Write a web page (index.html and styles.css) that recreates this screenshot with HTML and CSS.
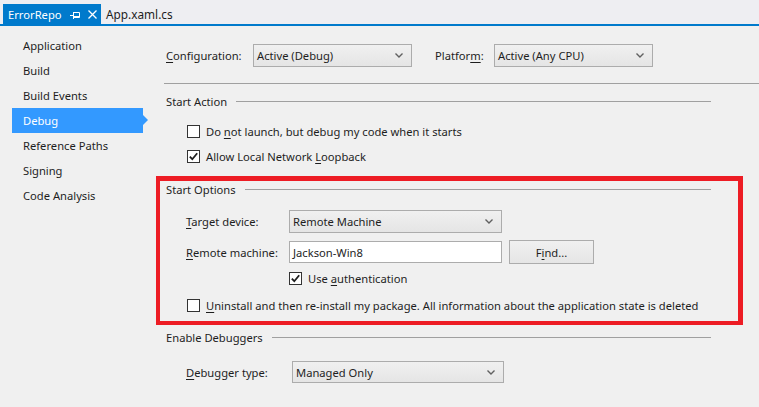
FILE: index.html
```html
<!DOCTYPE html>
<html>
<head>
<meta charset="utf-8">
<link rel="stylesheet" href="styles.css">
</head>
<body>
<div class="tabbar">
  <div class="tab active">
    <span class="tab-title">ErrorRepo</span>
    <svg class="pin" width="10" height="8" viewBox="0 0 10 8"><path d="M0 4.5H3.5M3.5 1V8M3.5 1.5H9.5V6.5H3.5M3.5 5.5H9.5" stroke="#fff" stroke-width="1" fill="none"/></svg>
    <svg class="close" width="9" height="9" viewBox="0 0 9 9"><path d="M0.5 0.5L8.5 8.5M8.5 0.5L0.5 8.5" stroke="#fff" stroke-width="1.3" fill="none"/></svg>
  </div>
  <div class="tab">App.xaml.cs</div>
</div>
<div class="main">
  <nav class="nav">
    <div class="nav-item">Application</div>
    <div class="nav-item">Build</div>
    <div class="nav-item">Build Events</div>
    <div class="nav-item selected">Debug</div>
    <div class="nav-item">Reference Paths</div>
    <div class="nav-item">Signing</div>
    <div class="nav-item">Code Analysis</div>
  </nav>
  <section class="content">
    <div class="config-row">
      <span class="lbl lbl-config"><u>C</u>onfiguration:</span>
      <div class="select sel-config"><span>Active (Debug)</span><svg width="8" height="5" viewBox="0 0 8 5"><path d="M0.5 0.5L4 4L7.5 0.5" stroke="#606060" stroke-width="1.4" fill="none"/></svg></div>
      <span class="lbl lbl-platform">Platfor<u>m</u>:</span>
      <div class="select sel-platform"><span>Active (Any CPU)</span><svg width="8" height="5" viewBox="0 0 8 5"><path d="M0.5 0.5L4 4L7.5 0.5" stroke="#606060" stroke-width="1.4" fill="none"/></svg></div>
    </div>
    <div class="rule"></div>

    <div class="heading h-action"><span>Start Action</span><i class="line"></i></div>
    <label class="check-row cr1"><span class="cb"></span><span>Do <u>n</u>ot launch, but debug my code when it starts</span></label>
    <label class="check-row cr2"><span class="cb checked"><svg width="11" height="11" viewBox="0 0 11 11"><path d="M1.8 5.6L4.3 8.2L9.2 2.2" stroke="#1e1e1e" stroke-width="1.8" fill="none"/></svg></span><span>Allow Local Network <u>L</u>oopback</span></label>

    <div class="heading h-options"><span>Start Options</span><i class="line"></i></div>
    <div class="form-row fr-target">
      <span class="flbl"><u>T</u>arget device:</span>
      <div class="select sel-target"><span>Remote Machine</span><svg width="8" height="5" viewBox="0 0 8 5"><path d="M0.5 0.5L4 4L7.5 0.5" stroke="#606060" stroke-width="1.4" fill="none"/></svg></div>
    </div>
    <div class="form-row fr-remote">
      <span class="flbl"><u>R</u>emote machine:</span>
      <div class="textbox">Jackson-Win8</div>
      <div class="button">F<u>i</u>nd...</div>
    </div>
    <label class="check-row cr-auth"><span class="cb checked"><svg width="11" height="11" viewBox="0 0 11 11"><path d="M1.8 5.6L4.3 8.2L9.2 2.2" stroke="#1e1e1e" stroke-width="1.8" fill="none"/></svg></span><span>Use <u>a</u>uthentication</span></label>
    <label class="check-row cr-uninstall"><span class="cb"></span><span><u>U</u>ninstall and then re-install my package. All information about the application state is deleted</span></label>

    <div class="heading h-debuggers"><span>Enable Debuggers</span><i class="line"></i></div>
    <div class="form-row fr-debugger">
      <span class="flbl flbl-debugger"><u>D</u>ebugger type:</span>
      <div class="select sel-debugger"><span>Managed Only</span><svg width="8" height="5" viewBox="0 0 8 5"><path d="M0.5 0.5L4 4L7.5 0.5" stroke="#606060" stroke-width="1.4" fill="none"/></svg></div>
    </div>
  </section>
</div>
<div class="highlight-box"></div>
</body>
</html>
```

FILE: styles.css
```css
* { box-sizing: border-box; }
html, body {
  margin: 0;
  padding: 0;
  background: #f0f0f0;
  width: 759px;
  height: 407px;
  overflow: hidden;
  font-family: "Noto Sans", "Liberation Sans", sans-serif;
  font-size: 11.2px;
  color: #1e1e1e;
}
u { text-decoration: underline; text-underline-offset: 2px; }

.tabbar {
  height: 26px;
  padding-top: 4px;
  padding-left: 3px;
  display: flex;
  align-items: stretch;
  background: #eeeef2;
  border-bottom: 2px solid #007acc;
}
.tab {
  display: flex;
  align-items: center;
  padding: 0 0 0 5px;
  font-size: 11.8px;
  color: #1e1e1e;
}
.tab.active {
  background: #007acc;
  color: #fff;
  width: 98px;
  padding-left: 5px;
  font-size: 11.2px;
}
.tab-title { margin-right: 8px; flex: none; }
.pin { margin-right: 8px; margin-top: 1px; flex: none; }
.close { margin-top: 1px; flex: none; }

.main { display: flex; }
.nav {
  width: 164px;
  padding-top: 7px;
  padding-left: 12px;
}
.nav-item {
  height: 25px;
  line-height: 25px;
  padding-left: 11px;
  width: 131px;
  position: relative;
}
.nav-item.selected {
  background: #3399ff;
  color: #fff;
}
.nav-item.selected::after {
  content: "";
  position: absolute;
  right: -5px;
  top: 7px;
  border-left: 5px solid #3399ff;
  border-top: 5px solid transparent;
  border-bottom: 5px solid transparent;
}

.content {
  flex: 1;
  display: flex;
  flex-direction: column;
}
.lbl, .flbl { white-space: nowrap; }
.config-row {
  margin-top: 18px;
  height: 23px;
  display: flex;
  align-items: center;
  padding-left: 2px;
}
.lbl-config { width: 87px; }
.lbl-platform { margin-left: 23px; width: 59px; }
.select {
  height: 23px;
  border: 1px solid #acacac;
  background: linear-gradient(#f0f0f0, #e5e5e5);
  display: flex;
  align-items: center;
  justify-content: space-between;
  padding: 0 8px 0 3px;
}
.select svg { flex: none; }
.sel-config { width: 159px; }
.sel-platform { width: 159px; }
.rule {
  margin-top: 16px;
  height: 1px;
  background: #a0a0a0;
}
.heading {
  display: flex;
  align-items: center;
  height: 18px;
  padding-left: 2px;
  margin-right: 48px;
}
.heading .line {
  flex: 1;
  height: 1px;
  background: #a0a0a0;
  margin-left: 9px;
}
.h-action { margin-top: 8px; }
.h-options { margin-top: 14px; }
.h-debuggers { margin-top: 13px; }

.check-row {
  display: flex;
  align-items: center;
  height: 20px;
  padding-left: 23px;
  white-space: nowrap;
}
.cb {
  width: 13px;
  height: 13px;
  border: 1px solid #333;
  background: #fff;
  margin-right: 6px;
  display: flex;
  align-items: center;
  justify-content: center;
  flex: none;
}
.cr1 { margin-top: 11px; }
.cr2 { margin-top: 5px; }
.cr-auth { margin-top: 4px; padding-left: 125px; }
.cr-uninstall { margin-top: 7px; }

.form-row {
  display: flex;
  align-items: center;
  padding-left: 22px;
}
.flbl { width: 103px; }
.flbl-debugger { width: 106px; }
.fr-target { margin-top: 12px; height: 23px; }
.sel-target { width: 213px; }
.fr-remote { margin-top: 7px; height: 24px; }
.textbox {
  width: 213px;
  height: 22px;
  border: 1px solid #acacac;
  background: #fff;
  padding-left: 3px;
  display: flex;
  align-items: center;
}
.button {
  margin-left: 7px;
  width: 85px;
  height: 24px;
  border: 1px solid #acacac;
  background: linear-gradient(#f0f0f0, #e5e5e5);
  display: flex;
  align-items: center;
  justify-content: center;
}
.fr-debugger { margin-top: 15px; height: 22px; }
.sel-debugger { width: 212px; height: 22px; }

.highlight-box {
  position: absolute;
  left: 156px;
  top: 176px;
  width: 587px;
  height: 149px;
  border-style: solid;
  border-color: #ed1c24;
  border-width: 5px 5px 4px 4px;
}
```
